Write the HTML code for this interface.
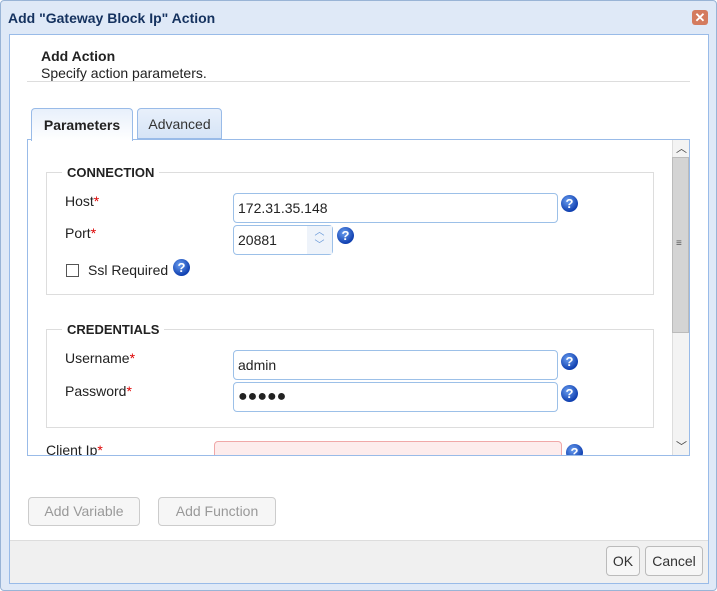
<!DOCTYPE html><html><head><style>
*{box-sizing:border-box;margin:0;padding:0}
body{width:717px;height:591px;background:#fff;font-family:"Liberation Sans",Arial,sans-serif;font-size:14px;color:#222;position:relative;overflow:hidden}
.a{position:absolute}
.inp{position:absolute;border:1px solid #9cc0e8;border-radius:4px;background:#fff;padding:0 4px;line-height:28px;font-size:14px}
.help{position:absolute;width:17px;height:17px;border-radius:50%;background:radial-gradient(circle at 40% 35%,#6a9ef0,#1040b0 70%);color:#fff;font-weight:bold;font-size:13px;line-height:17px;text-align:center}
.req{color:#d00}
.btn{position:absolute;border:1px solid #ccc;border-radius:4px;background:#f6f6f6;text-align:center;font-size:14px}
fieldset{position:absolute;border:1px solid #ddd}
.lg{position:absolute;background:#fff;padding:0 5px;font-weight:bold;font-size:13px}
</style></head><body>
<div class="a" style="left:0;top:0;width:717px;height:591px;border:1px solid #99b4d6;border-radius:4px;background:#dfe9f7"></div>
<div class="a" style="left:8px;top:10px;font-weight:bold;font-size:14px;color:#15325f">Add "Gateway Block Ip" Action</div>
<div class="a" style="left:692px;top:10px;width:16px;height:15px;background:#d47b5e;border-radius:3px;color:#fff;font-size:13px;line-height:15px;text-align:center;font-weight:bold">✕</div>
<div class="a" style="left:9px;top:34px;width:700px;height:550px;border:1px solid #99bbe8;background:#fff"></div>
<div class="a" style="left:10px;top:540px;width:698px;height:43px;background:#f0f0f0;border-top:1px solid #ddd"></div>
<div class="a" style="left:41px;top:48px;font-weight:bold">Add Action</div>
<div class="a" style="left:41px;top:65px">Specify action parameters.</div>
<div class="a" style="left:27px;top:81px;width:663px;height:1px;background:#ddd"></div>
<div class="a" style="left:27px;top:139px;width:663px;height:317px;border:1px solid #99bbe8"></div>
<div class="a" style="left:31px;top:108px;width:102px;height:33px;border:1px solid #99bbe8;border-bottom:none;border-radius:4px 4px 0 0;background:linear-gradient(#e8f0fb,#fff);font-weight:bold;text-align:center;line-height:32px">Parameters</div>
<div class="a" style="left:137px;top:108px;width:85px;height:31px;border:1px solid #99bbe8;border-radius:4px 4px 0 0;background:linear-gradient(#e8f0fb,#d6e4f6);text-align:center;line-height:31px;color:#333">Advanced</div>
<div class="a" style="left:672px;top:140px;width:17px;height:315px;background:#f3f3f3;border-left:1px solid #ddd"></div>
<div class="a" style="left:672px;top:157px;width:17px;height:176px;background:#d4d4d4;border:1px solid #bbb"></div>
<div class="a" style="left:676px;top:238px;font-size:10px;color:#555">≡</div>
<div class="a" style="left:676px;top:140px;font-size:11px;color:#444">︿</div>
<div class="a" style="left:676px;top:438px;font-size:11px;color:#444">﹀</div>
<fieldset style="left:46px;top:172px;width:608px;height:123px"></fieldset>
<div class="lg" style="left:62px;top:165px">CONNECTION</div>
<div class="a" style="left:65px;top:193px">Host<span class="req">*</span></div>
<div class="inp" style="left:233px;top:193px;width:325px;height:30px">172.31.35.148</div>
<div class="help" style="left:561px;top:195px">?</div>
<div class="a" style="left:65px;top:225px">Port<span class="req">*</span></div>
<div class="inp" style="left:233px;top:225px;width:100px;height:30px">20881</div>
<div class="a" style="left:307px;top:226px;width:25px;height:28px;background:#eef3fa;color:#6a9ad8;font-size:10px;text-align:center;line-height:13px">︿<br>﹀</div>
<div class="help" style="left:337px;top:227px">?</div>
<div class="a" style="left:66px;top:264px;width:13px;height:13px;border:1px solid #555;background:#fff"></div>
<div class="a" style="left:88px;top:262px">Ssl Required</div>
<div class="help" style="left:173px;top:259px">?</div>
<fieldset style="left:46px;top:329px;width:608px;height:99px"></fieldset>
<div class="lg" style="left:62px;top:322px">CREDENTIALS</div>
<div class="a" style="left:65px;top:350px">Username<span class="req">*</span></div>
<div class="inp" style="left:233px;top:350px;width:325px;height:30px">admin</div>
<div class="help" style="left:561px;top:353px">?</div>
<div class="a" style="left:65px;top:383px">Password<span class="req">*</span></div>
<div class="inp" style="left:233px;top:382px;width:325px;height:30px;font-size:16px">●●●●●</div>
<div class="help" style="left:561px;top:385px">?</div>
<div class="a" style="left:28px;top:440px;width:644px;height:15px;overflow:hidden">
<div class="a" style="left:18px;top:2px">Client Ip<span class="req">*</span></div>
<div class="a" style="left:186px;top:1px;width:348px;height:30px;border:1px solid #f0a8a8;border-radius:4px;background:#fdecec"></div>
<div class="help" style="left:538px;top:4px">?</div>
</div>
<div class="btn" style="left:28px;top:497px;width:112px;height:29px;line-height:27px;color:#999">Add Variable</div>
<div class="btn" style="left:158px;top:497px;width:118px;height:29px;line-height:27px;color:#999">Add Function</div>
<div class="btn" style="left:606px;top:546px;width:34px;height:30px;line-height:28px;border-color:#bbb;color:#333">OK</div>
<div class="btn" style="left:645px;top:546px;width:58px;height:30px;line-height:28px;border-color:#bbb;color:#333">Cancel</div>
</body></html>
